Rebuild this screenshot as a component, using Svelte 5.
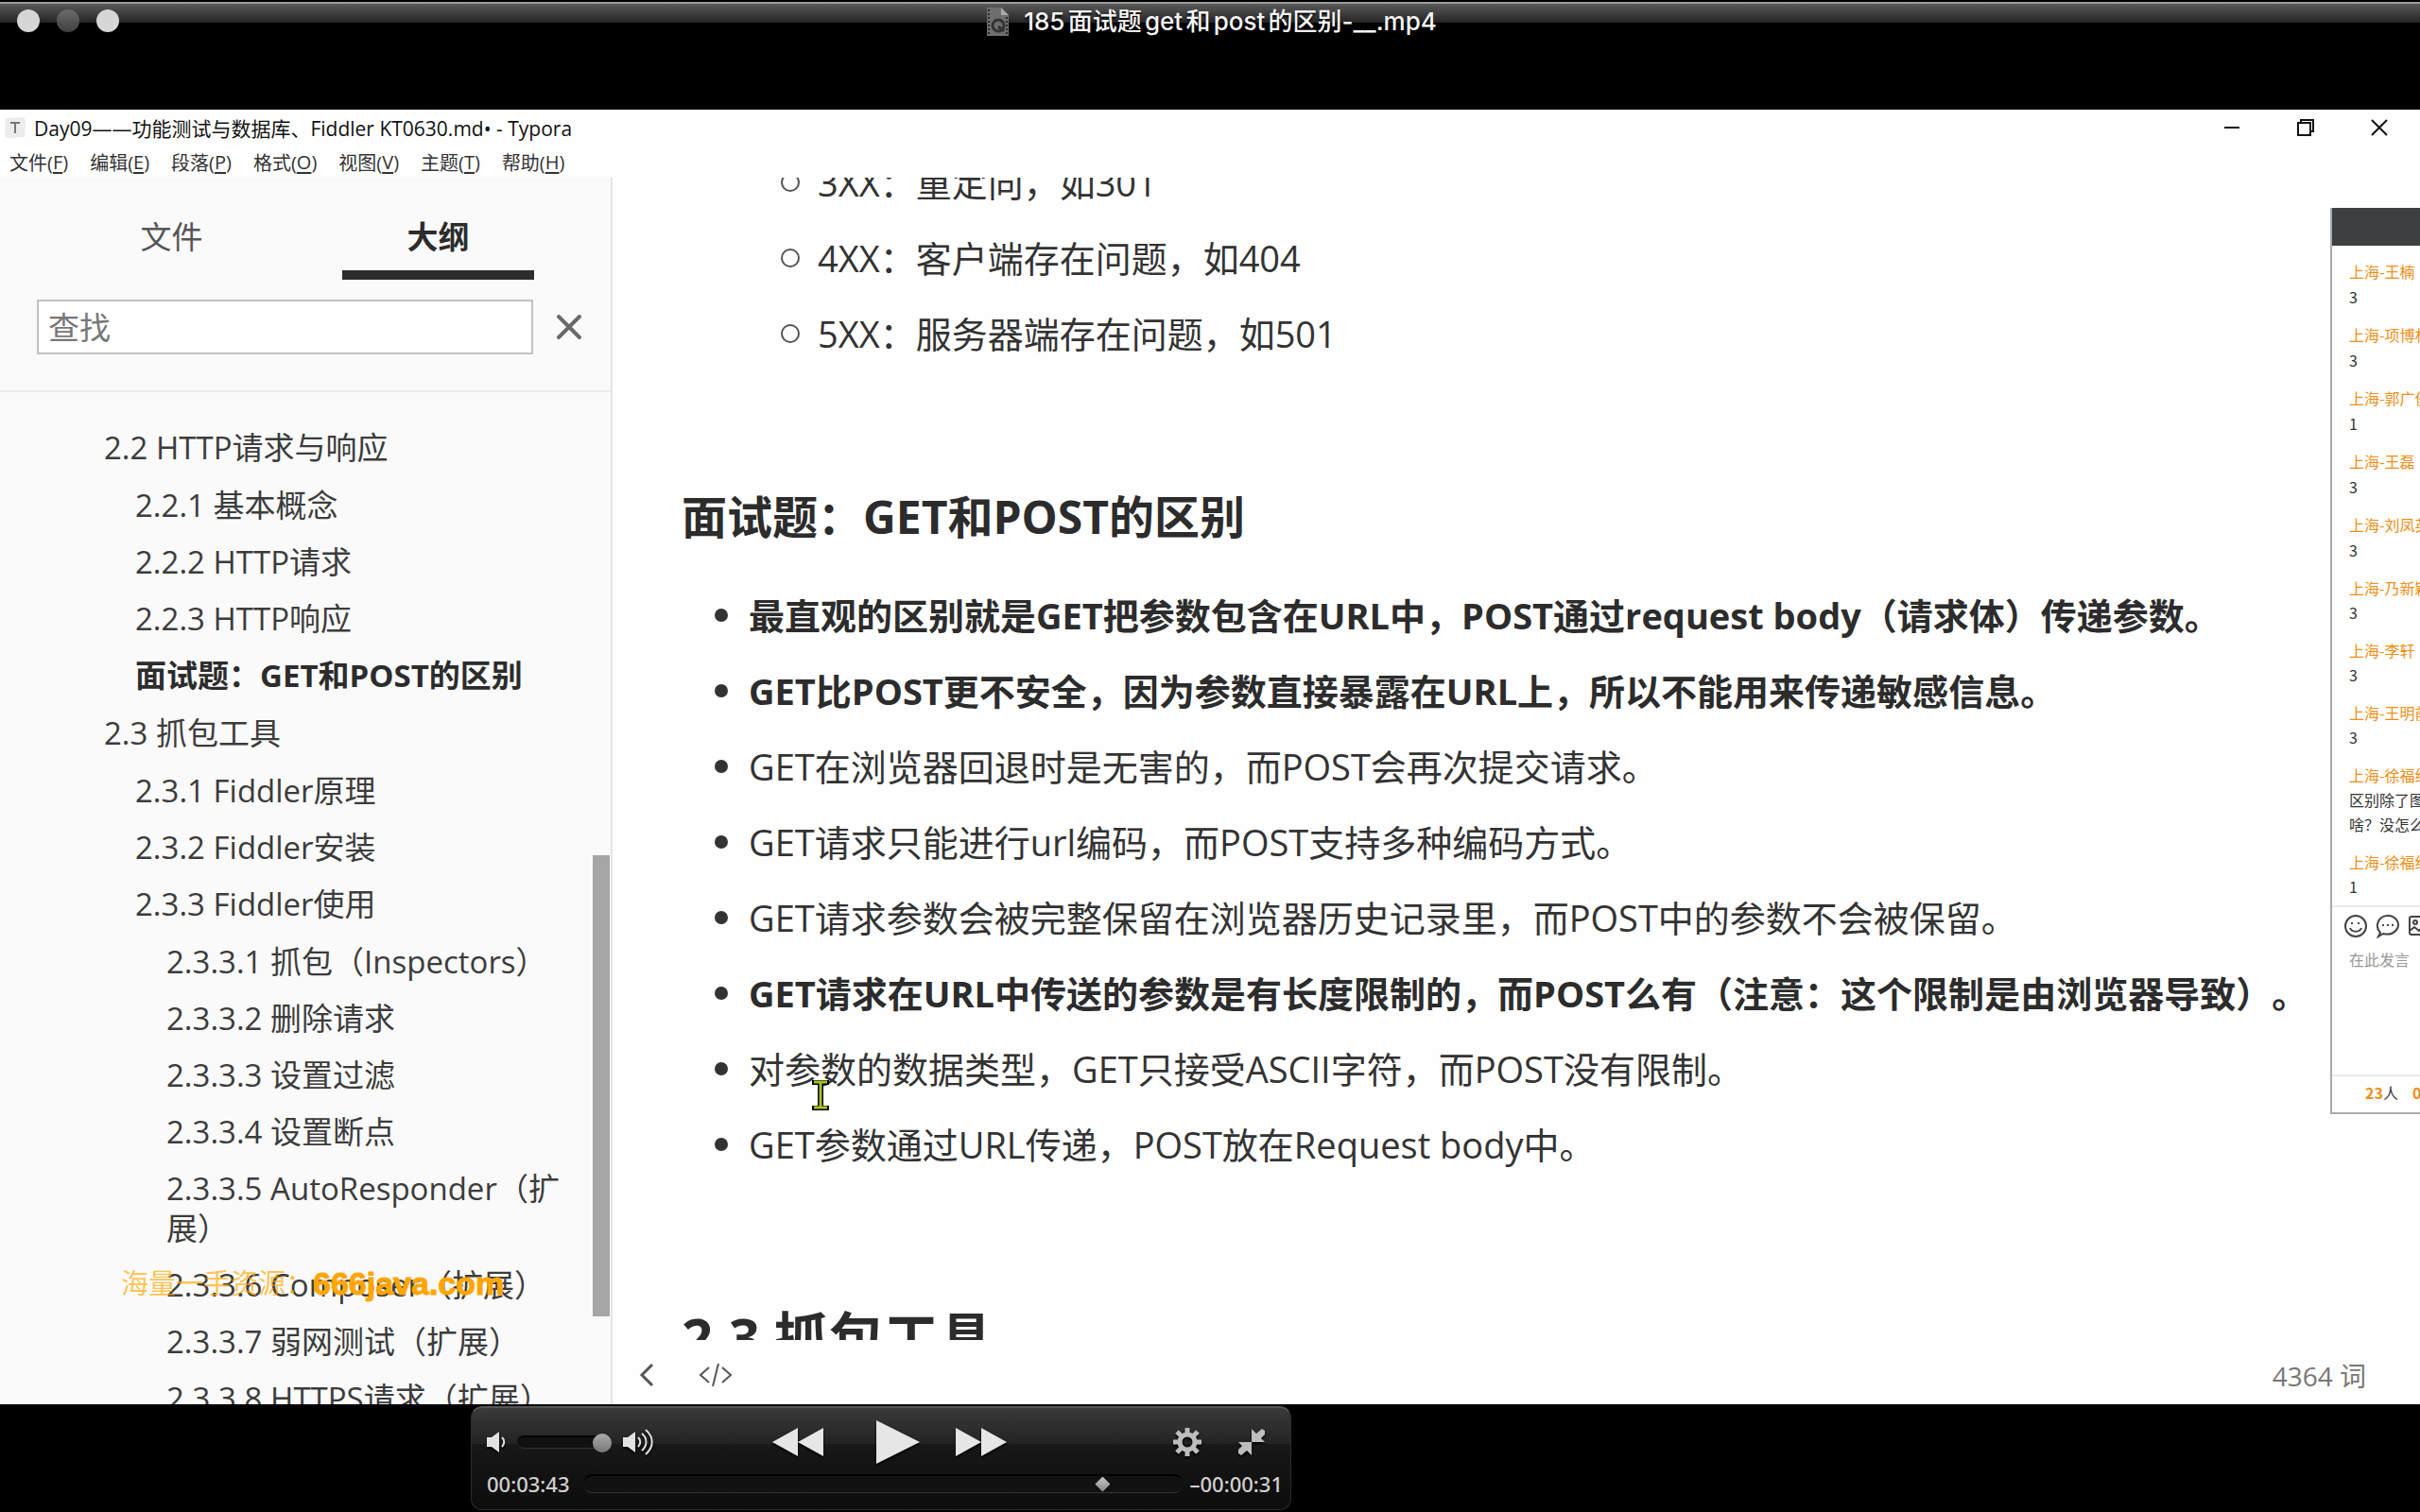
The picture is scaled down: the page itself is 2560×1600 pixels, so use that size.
<script>
  const menus = [
    ['文件', 'F'], ['编辑', 'E'], ['段落', 'P'], ['格式', 'O'],
    ['视图', 'V'], ['主题', 'T'], ['帮助', 'H'],
  ];

  const outline = [
    {
      label: '2.2 HTTP请求与响应',
      children: [
        { label: '2.2.1 基本概念' },
        { label: '2.2.2 HTTP请求' },
        { label: '2.2.3 HTTP响应' },
        { label: '面试题：GET和POST的区别', active: true },
      ],
    },
    {
      label: '2.3 抓包工具',
      children: [
        { label: '2.3.1 Fiddler原理' },
        { label: '2.3.2 Fiddler安装' },
        {
          label: '2.3.3 Fiddler使用',
          children: [
            { label: '2.3.3.1 抓包（Inspectors）' },
            { label: '2.3.3.2 删除请求' },
            { label: '2.3.3.3 设置过滤' },
            { label: '2.3.3.4 设置断点' },
            { label: '2.3.3.5 AutoResponder（扩展）' },
            { label: '2.3.3.6 Composer（扩展）' },
            { label: '2.3.3.7 弱网测试（扩展）' },
            { label: '2.3.3.8 HTTPS请求（扩展）' },
          ],
        },
      ],
    },
  ];

  const codes = ['3XX：重定向，如301', '4XX：客户端存在问题，如404', '5XX：服务器端存在问题，如501'];

  const points = [
    { text: '最直观的区别就是GET把参数包含在URL中，POST通过request body（请求体）传递参数。', strong: true },
    { text: 'GET比POST更不安全，因为参数直接暴露在URL上，所以不能用来传递敏感信息。', strong: true },
    { text: 'GET在浏览器回退时是无害的，而POST会再次提交请求。' },
    { text: 'GET请求只能进行url编码，而POST支持多种编码方式。' },
    { text: 'GET请求参数会被完整保留在浏览器历史记录里，而POST中的参数不会被保留。' },
    { text: 'GET请求在URL中传送的参数是有长度限制的，而POST么有（注意：这个限制是由浏览器导致）。', strong: true },
    { text: '对参数的数据类型，GET只接受ASCII字符，而POST没有限制。' },
    { text: 'GET参数通过URL传递，POST放在Request body中。' },
  ];

  const chat = [
    { name: '上海-王楠', lines: ['3'] },
    { name: '上海-项博林', lines: ['3'] },
    { name: '上海-郭广俊', lines: ['1'] },
    { name: '上海-王磊', lines: ['3'] },
    { name: '上海-刘凤英', lines: ['3'] },
    { name: '上海-乃新颖', lines: ['3'] },
    { name: '上海-李轩', lines: ['3'] },
    { name: '上海-王明前', lines: ['3'] },
    { name: '上海-徐福纪', lines: ['区别除了图', '啥？没怎么'] },
    { name: '上海-徐福纪', lines: ['1'] },
  ];
</script>

{#snippet tree(items)}
  <ul>
    {#each items as item}
      <li>
        <a href="#outline" class:active={item.active}>{item.label}</a>
        {#if item.children}{@render tree(item.children)}{/if}
      </li>
    {/each}
  </ul>
{/snippet}

<div class="screen" lang="zh-CN">
  <header class="player-title">
    <div class="lights">
      <button aria-label="关闭"></button>
      <button aria-label="最小化" class="dim"></button>
      <button aria-label="缩放"></button>
    </div>
    <h1>
      <svg width="24" height="30" viewBox="0 0 24 30" aria-hidden="true">
        <path d="M0 0h15l8 8v22H0z" fill="#6e6e6e" />
        <path d="M15 0v8h8z" fill="#a8a8a8" />
        <path d="M2 2v27M21 10v19" stroke="#2a2a2a" stroke-width="2" stroke-dasharray="2 2" />
        <circle cx="12" cy="19" r="6" fill="none" stroke="#333" stroke-width="3" />
        <path d="M12 20l6 5" stroke="#333" stroke-width="3" />
      </svg>
      185面试题get和post的区别-__.mp4
    </h1>
  </header>

  <main class="typora">
    <div class="caption">
      <svg class="app-icon" width="24" height="24" viewBox="0 0 24 24" aria-hidden="true">
        <path d="M2 2l19-1 2 4-1 17-19 1-2-4z" fill="#ececec" />
        <path d="M7 7h10M12 7v11" stroke="#777" stroke-width="2" />
      </svg>
      <span>Day09——功能测试与数据库、Fiddler KT0630.md• - Typora</span>
      <div class="win-buttons">
        <button aria-label="最小化">
          <svg width="18" height="18" viewBox="0 0 18 18"><path d="M1 9h16" /></svg>
        </button>
        <button aria-label="还原">
          <svg width="18" height="18" viewBox="0 0 18 18"><path d="M1 4h13v13H1zM4 4V1h13v12h-3" /></svg>
        </button>
        <button aria-label="关闭">
          <svg width="18" height="18" viewBox="0 0 18 18"><path d="M1 1l16 16M17 1L1 17" /></svg>
        </button>
      </div>
    </div>

    <nav class="menubar">
      {#each menus as [label, key]}
        <button>{label}(<u>{key}</u>)</button>
      {/each}
    </nav>

    <div class="workspace">
      <aside>
        <div class="tabs">
          <button>文件</button>
          <button class="selected">大纲</button>
        </div>
        <div class="search">
          <input type="text" placeholder="查找" aria-label="查找" />
          <button aria-label="清除">
            <svg width="28" height="28" viewBox="0 0 28 28">
              <path d="M3 3l22 22M25 3L3 25" fill="none" stroke="#6a6a6a" stroke-width="4" stroke-linecap="round" />
            </svg>
          </button>
        </div>
        <nav class="outline">
          {@render tree(outline)}
        </nav>
        <div class="scroll-thumb"></div>
        <p class="watermark"><span>海量一手资源：</span><b>666java.com</b></p>
      </aside>

      <section class="editor">
        <article>
          <ul class="codes">
            {#each codes as code}<li>{code}</li>{/each}
          </ul>
          <h3>面试题：GET和POST的区别</h3>
          <ul class="points">
            {#each points as point}
              <li class:strong={point.strong}>{point.text}</li>
            {/each}
          </ul>
          <h2>2.3 抓包工具</h2>
        </article>
        <footer>
          <button aria-label="返回">
            <svg width="16" height="26" viewBox="0 0 16 26"><path d="M14 2L3 13l11 11" stroke-width="3" /></svg>
          </button>
          <button aria-label="源代码模式">
            <svg width="36" height="26" viewBox="0 0 36 26">
              <path d="M11 5l-9 8 9 8M25 5l9 8-9 8M21 1l-6 24" stroke-width="2" />
            </svg>
          </button>
          <span class="words">4364 词</span>
        </footer>
      </section>
    </div>

    <svg class="cursor" width="20" height="34" viewBox="0 0 20 34" aria-hidden="true">
      <path d="M1 1h18v5h-6v22h6v5H1v-5h6V6H1z" fill="#000" />
      <path d="M3 3h14M10 3v28M3 30h14" stroke="#a5c21c" stroke-width="3" />
    </svg>

    <section class="chat">
      <div class="chat-head"></div>
      <div class="messages">
        {#each chat as msg}
          <div class="message">
            <strong>{msg.name}</strong>
            {#each msg.lines as line}<p>{line}</p>{/each}
          </div>
        {/each}
      </div>
      <div class="compose">
        <div class="tools">
          <button aria-label="表情">
            <svg width="26" height="26" viewBox="0 0 26 26">
              <circle cx="13" cy="13" r="11" />
              <path d="M7 15c2 5 10 5 12 0M9 9v2M16 9v2" />
            </svg>
          </button>
          <button aria-label="快捷回复">
            <svg width="26" height="26" viewBox="0 0 26 26">
              <path d="M5 20c-7-8-1-18 8-18s14 9 9 15c-4 5-10 5-14 4l-5 3z" />
              <path d="M7 12h2M12 12h2M17 12h2" />
            </svg>
          </button>
          <button aria-label="图片">
            <svg width="26" height="26" viewBox="0 0 26 26">
              <rect x="2" y="3" width="22" height="19" rx="2" />
              <circle cx="8" cy="9" r="2" />
              <path d="M2 18l5-4 5 4 6-7 6 7" />
            </svg>
          </button>
        </div>
        <textarea placeholder="在此发言" aria-label="在此发言"></textarea>
      </div>
      <div class="count"><span><b>23</b>人</span><b>0</b></div>
    </section>
  </main>

  <footer class="dock">
    <div class="controls">
      <div class="row">
        <svg width="22" height="24" viewBox="0 0 22 24" aria-hidden="true">
          <path d="M0 7h5l8-6v22l-8-6H0z" fill="#e2e2e2" />
          <path d="M16 7c3 3 3 7 0 10" fill="none" stroke="#e2e2e2" stroke-width="2" />
        </svg>
        <input class="volume" type="range" min="0" max="100" value="100" aria-label="音量" />
        <svg width="32" height="28" viewBox="0 0 32 28" aria-hidden="true">
          <path d="M0 9h5l8-6v22l-8-6H0z" fill="#e2e2e2" />
          <path d="M16 9c3 3 3 7 0 10M20 5c6 5 6 13 0 18M24 1c9 8 9 18 0 26" fill="none" stroke="#e2e2e2" stroke-width="2" />
        </svg>
        <div class="transport">
          <button aria-label="快退">
            <svg width="54" height="30" viewBox="0 0 54 30"><path d="M27 0v30L0 15zM54 0v30L27 15z" fill="#e6e6e6" /></svg>
          </button>
          <button aria-label="播放">
            <svg width="46" height="46" viewBox="0 0 46 46"><path d="M0 0l46 23L0 46z" fill="#e6e6e6" /></svg>
          </button>
          <button aria-label="快进">
            <svg width="54" height="30" viewBox="0 0 54 30"><path d="M0 0v30l27-15zM27 0v30l27-15z" fill="#e6e6e6" /></svg>
          </button>
        </div>
        <div class="extras">
          <button aria-label="设置">
            <svg width="30" height="30" viewBox="0 0 30 30">
              <circle cx="15" cy="15" r="8" fill="none" stroke="#bdbdbd" stroke-width="5" />
              <path
                d="M15 0v6M15 24v6M0 15h6M24 15h6M4 4l5 5M21 21l5 5M26 4l-5 5M9 21l-5 5"
                stroke="#bdbdbd"
                stroke-width="5"
              />
            </svg>
          </button>
          <button aria-label="退出全屏">
            <svg width="28" height="28" viewBox="0 0 28 28">
              <path
                d="M14 0v14h14l-4-4 4-4V2l-3-2-6 5zM14 28V14H0l4 4-4 4v4l3 2 6-5z"
                fill="#bdbdbd"
              />
            </svg>
          </button>
        </div>
      </div>
      <div class="row timeline">
        <time>00:03:43</time>
        <input class="scrub" type="range" min="0" max="254" value="223" aria-label="播放进度" />
        <time>–00:00:31</time>
      </div>
    </div>
  </footer>
</div>

<style>
  :global(body) {
    background: #000;
  }

  * {
    box-sizing: border-box;
  }

  button {
    display: flex;
    align-items: center;
    justify-content: center;
    padding: 0;
    border: 0;
    background: none;
    color: inherit;
    font: inherit;
  }

  ul,
  p,
  h1,
  h2,
  h3 {
    margin: 0;
    padding: 0;
    list-style: none;
  }

  .screen {
    display: flex;
    flex-direction: column;
    height: 100vh;
    overflow: hidden;
    color: #333;
    font-family: 'Open Sans', 'Noto Sans CJK SC', sans-serif;
    text-spacing-trim: space-all;
  }

  /* Player title bar */
  .player-title {
    display: grid;
    grid-template-columns: 1fr auto 1fr;
    align-items: start;
    flex: none;
    height: 116px;
    padding: 0 14px 0 18px;
    border-top: 2px solid #000;
    background: linear-gradient(#9c9c9c 0 2px, #5a5a5a 2px, #242424 22px, #000 22px);
  }

  .lights {
    display: flex;
    gap: 18px;
    padding-top: 8px;
  }

  .lights button {
    width: 24px;
    height: 24px;
    border-radius: 50%;
    background: #d6d6d6;
  }

  .lights .dim {
    background: linear-gradient(#6c6c6c, #3f3f3f);
  }

  h1 {
    display: flex;
    align-items: center;
    gap: 15px;
    color: #f5f5f5;
    font: 500 26px/42px Inter, 'Noto Sans CJK SC', sans-serif;
    text-autospace: normal;
    text-shadow: 0 2px 2px #000;
  }

  /* Editor window */
  .typora {
    position: relative;
    display: flex;
    flex: 1;
    flex-direction: column;
    min-height: 0;
    overflow: hidden;
    background: #fefefe;
  }

  .caption {
    display: flex;
    align-items: center;
    height: 38px;
    padding-left: 4px;
    color: #111;
    font-size: 21px;
    white-space: nowrap;
  }

  .app-icon {
    margin-right: 8px;
  }

  .win-buttons {
    display: flex;
    margin-left: auto;
    padding-right: 4px;
  }

  .win-buttons button {
    width: 78px;
    height: 38px;
  }

  .win-buttons svg {
    fill: none;
    stroke: #111;
    stroke-width: 2;
  }

  .menubar {
    display: flex;
    gap: 23px;
    height: 34px;
    padding-left: 10px;
    font-size: 20px;
  }

  .menubar u {
    text-underline-offset: 3px;
  }

  .workspace {
    display: flex;
    flex: 1;
    min-height: 0;
  }

  /* Sidebar */
  aside {
    position: relative;
    flex: none;
    width: 648px;
    overflow: hidden;
    border-right: 2px solid #e4e4e4;
    background: #fafafa;
  }

  .tabs {
    display: flex;
    justify-content: space-between;
    height: 108px;
    padding: 24px 81px 0 80px;
    color: #555;
    font-size: 33px;
  }

  .tabs button {
    width: 203px;
    height: 84px;
    border-bottom: 10px solid transparent;
  }

  .tabs .selected {
    border-color: #2c2c2c;
    color: #2c2c2c;
    font-weight: 700;
  }

  .search {
    display: flex;
    align-items: center;
    gap: 24px;
    height: 119px;
    padding: 0 30px 18px 39px;
    border-bottom: 2px solid #ececec;
  }

  .search input {
    width: 525px;
    height: 58px;
    padding: 2px 10px 0;
    border: 2px solid #c2c2c2;
    background: #fff;
    color: #333;
    font: inherit;
    font-size: 33px;
  }

  .search input::placeholder {
    color: #777;
  }

  .outline {
    padding: 29px 50px 0 77px;
    color: #3c3c3c;
    font-size: 33px;
    line-height: 42px;
  }

  .outline > ul {
    padding-left: 33px;
  }

  .outline a {
    display: block;
    padding: 9px 0;
    color: inherit;
    text-decoration: none;
  }

  .outline .active {
    color: #2c2c2c;
    font-weight: 700;
  }

  .outline ul ul {
    padding: 1px 0 1px 33px;
  }

  .scroll-thumb {
    position: absolute;
    top: 717px;
    right: 1px;
    width: 18px;
    height: 488px;
    background: #a6a6a6;
  }

  .watermark {
    position: absolute;
    top: 1150px;
    left: 128px;
    display: flex;
    align-items: center;
    color: #ffa500;
    line-height: 40px;
    white-space: nowrap;
  }

  .watermark span {
    opacity: 0.65;
    font-size: 29px;
  }

  .watermark b {
    font: 700 34px/40px 'Liberation Sans', sans-serif;
    -webkit-text-stroke: 1px #ffa500;
  }

  /* Document */
  .editor {
    display: flex;
    flex: 1;
    flex-direction: column;
    min-width: 0;
  }

  article {
    flex: 1;
    min-height: 0;
    overflow: hidden;
    padding-left: 73px;
    font-size: 38px;
    line-height: 80px;
    white-space: nowrap;
  }

  article li {
    display: flex;
    align-items: center;
  }

  article li::before {
    content: '';
    border-radius: 50%;
  }

  .codes {
    margin-top: -35px;
    padding-left: 105px;
  }

  .codes li::before {
    width: 16px;
    height: 16px;
    margin-right: 19px;
    border: 2px solid #555;
  }

  h3 {
    margin: 122px 0 32px;
    color: #2c2c2c;
    font-size: 48px;
    line-height: 64px;
  }

  .points {
    padding-left: 35px;
  }

  .points li::before {
    width: 14px;
    height: 14px;
    margin-right: 22px;
    background: #333;
  }

  .strong {
    color: #2c2c2c;
    font-weight: 700;
  }

  h2 {
    margin-top: 123px;
    color: #2c2c2c;
    font-size: 58px;
    line-height: 82px;
  }

  .editor footer {
    display: flex;
    flex: none;
    align-items: center;
    gap: 47px;
    height: 68px;
    padding: 6px 57px 0 28px;
  }

  .editor footer svg {
    fill: none;
    stroke: #555;
  }

  .words {
    margin-left: auto;
    color: #777;
    font-size: 28px;
  }

  .cursor {
    position: absolute;
    top: 1026px;
    left: 858px;
  }

  /* Chat overlay, partly beyond the right edge */
  .chat {
    position: absolute;
    top: 104px;
    right: 0;
    display: flex;
    flex-direction: column;
    width: 95px;
    height: 959px;
    overflow: hidden;
    border-bottom: 2px solid #aaa;
    border-left: 2px solid #aaa;
    background: #fefefe;
    font-family: 'Noto Sans CJK SC', sans-serif;
    font-size: 16px;
    white-space: nowrap;
  }

  .chat-head {
    flex: none;
    height: 40px;
    margin-left: -2px;
    background: #3c4043;
  }

  .messages {
    flex: none;
    height: 698px;
    padding: 14px 0 0 18px;
    line-height: 26px;
  }

  .message {
    margin-bottom: 14px;
  }

  .message strong {
    display: block;
    color: #ef8e15;
    font-weight: 400;
    line-height: 27px;
  }

  .message:nth-child(n + 6) strong {
    line-height: 26px;
  }

  .compose {
    display: flex;
    flex: 1;
    flex-direction: column;
    border-top: 2px solid #eaeaf0;
  }

  .tools {
    display: flex;
    gap: 8px;
    padding: 7px 0 0 12px;
  }

  .tools svg {
    flex: none;
    fill: none;
    stroke: #444;
    stroke-width: 2;
  }

  textarea {
    flex: 1;
    width: 100%;
    padding: 10px 0 0 18px;
    border: 0;
    background: none;
    font: inherit;
    resize: none;
  }

  textarea::placeholder {
    color: #999;
  }

  .count {
    display: flex;
    align-items: center;
    gap: 15px;
    height: 40px;
    padding: 0 0 4px 35px;
    border-top: 2px solid #eaeaf0;
  }

  .count b {
    color: #ef8e15;
  }

  /* Playback controls */
  .dock {
    flex: none;
    padding: 2px 0 2px 498px;
    background: #000;
  }

  .controls {
    width: 868px;
    height: 110px;
    padding: 13px 8px 0 16px;
    border: 1px solid #2c2c2c;
    border-top: 2px solid #565656;
    border-radius: 12px;
    background: linear-gradient(#3a3a3a, #232323 35%, #181818 36%, #0c0c0c);
    color: #d0d0d0;
  }

  .row {
    display: flex;
    align-items: center;
    height: 46px;
  }

  .row svg {
    filter: drop-shadow(0 2px 1px #000);
  }

  input[type='range'] {
    appearance: none;
    border-top: 2px solid #000;
    border-bottom: 1px solid #333;
    background: #111;
  }

  .volume {
    width: 100px;
    height: 14px;
    margin: 0 12px 0 10px;
    border-radius: 7px;
  }

  .volume::-webkit-slider-thumb {
    width: 20px;
    height: 20px;
    appearance: none;
    border-radius: 50%;
    background: linear-gradient(#aaa, #777);
  }

  .transport {
    display: flex;
    align-items: center;
    gap: 38px;
    margin-left: 126px;
  }

  .transport button:first-child {
    margin-right: 18px;
  }

  .extras {
    display: flex;
    align-items: center;
    gap: 39px;
    margin-left: auto;
    padding-right: 19px;
  }

  .timeline {
    gap: 16px;
    height: 42px;
  }

  time {
    font: 500 22px/30px 'Noto Sans', sans-serif;
  }

  time:last-child {
    margin-left: -7px;
  }

  .scrub {
    flex: 1;
    min-width: 0;
    height: 20px;
    margin: 0;
    border-radius: 8px;
  }

  .scrub::-webkit-slider-thumb {
    width: 16px;
    height: 16px;
    appearance: none;
    background: linear-gradient(#c4c4c4, #888);
    clip-path: polygon(50% 0, 100% 50%, 50% 100%, 0 50%);
  }
</style>
